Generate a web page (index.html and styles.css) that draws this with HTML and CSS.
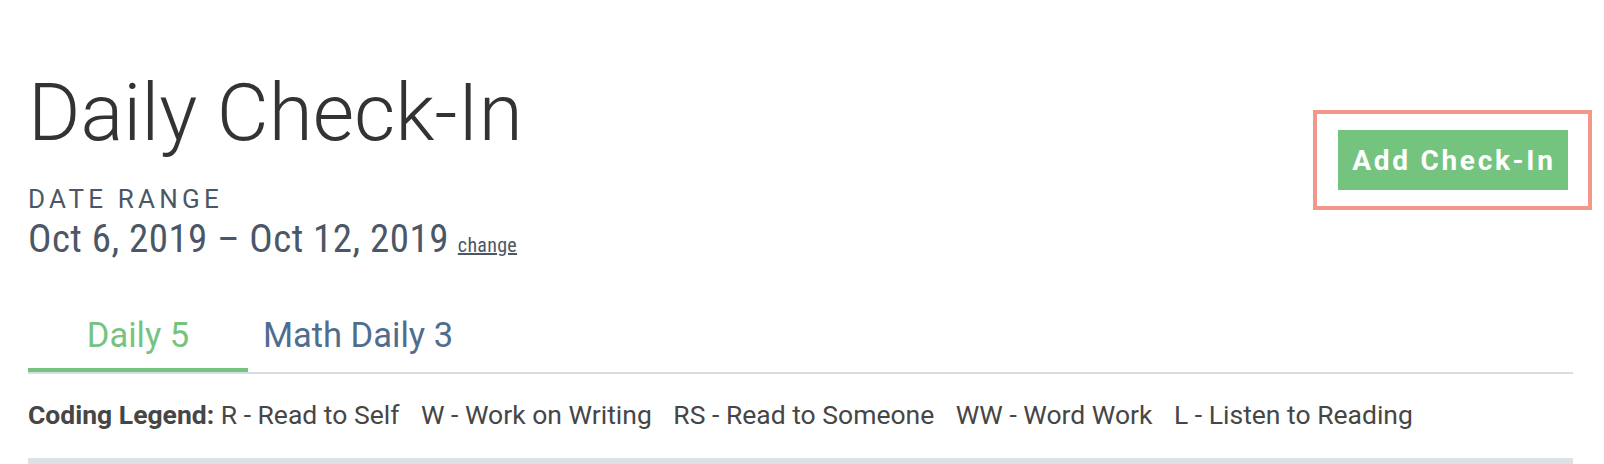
FILE: index.html
```html
<!DOCTYPE html>
<html lang="en">
<head>
<meta charset="utf-8">
<title>Daily Check-In</title>
<link rel="stylesheet" href="styles.css">
</head>
<body>
<main class="page">
  <header class="header">
    <div class="heading">
      <h1 class="title">Daily Check-In</h1>
      <div class="range-label">DATE RANGE</div>
      <div class="range"><span class="range-value">Oct 6, 2019 – Oct 12, 2019</span><a class="change" href="#">change</a></div>
    </div>
    <div class="action">
      <button class="add-btn" type="button">Add Check-In</button>
    </div>
  </header>

  <nav class="tabs">
    <a class="tab tab-active" href="#">Daily 5</a>
    <a class="tab" href="#">Math Daily 3</a>
  </nav>

  <p class="legend">
    <b class="legend-title">Coding Legend:</b>
    <span class="legend-item">R - Read to Self</span>
    <span class="legend-item">W - Work on Writing</span>
    <span class="legend-item">RS - Read to Someone</span>
    <span class="legend-item">WW - Word Work</span>
    <span class="legend-item">L - Listen to Reading</span>
  </p>

  <div class="table-head"></div>
</main>
</body>
</html>
```

FILE: styles.css
```css
* { box-sizing: border-box; }

html, body {
  margin: 0;
  padding: 0;
  background: #ffffff;
}

body {
  font-family: Roboto, "Liberation Sans", sans-serif;
  overflow: hidden;
}

.page {
  padding: 65px 31px 0 28px;
}

.header {
  display: flex;
  justify-content: space-between;
  align-items: flex-start;
}

.title {
  margin: 0;
  font-size: 80px;
  line-height: 96px;
  font-weight: 300;
  color: #333333;
}

.range-label {
  margin-top: 23px;
  font-size: 26px;
  line-height: 30px;
  letter-spacing: 4.2px;
  color: #4b5767;
}

.range {
  margin-top: 3px;
  height: 44px;
  font-family: "Roboto Condensed", Roboto, sans-serif;
  font-stretch: condensed;
  font-size: 39px;
  line-height: 44px;
  color: #4b5767;
  white-space: nowrap;
}

.range-value {
  letter-spacing: 0.45px;
}

.change {
  margin-left: 9px;
  font-size: 20px;
  line-height: 1;
  letter-spacing: 0.3px;
  color: #4b5767;
}

.action {
  position: relative;
  margin-top: 65px;
  margin-right: 5px;
}

.action::after {
  content: "";
  position: absolute;
  left: -25px;
  right: -24px;
  top: -20px;
  bottom: -20px;
  border: 4px solid #f3978a;
  pointer-events: none;
}

.add-btn {
  display: block;
  width: 230px;
  height: 60px;
  border: 0;
  background: #74c47f;
  color: #ffffff;
  font-family: Roboto, "Liberation Sans", sans-serif;
  font-weight: 700;
  font-size: 28px;
  letter-spacing: 2.7px;
  padding: 0 0 0 2px;
}

.tabs {
  display: flex;
  margin-top: 54px;
  border-bottom: 2px solid #d9dde1;
}

.tab {
  width: 220px;
  text-align: center;
  font-size: 34.5px;
  line-height: 40px;
  padding-bottom: 13px;
  border-bottom: 4px solid transparent;
  color: #506d8e;
  text-decoration: none;
}

.tab-active {
  color: #74c47f;
  border-bottom-color: #74c47f;
}

.legend {
  margin: 26px 0 0 0;
  font-size: 26.5px;
  line-height: 30px;
  color: #464646;
  white-space: nowrap;
}

.legend-title {
  font-weight: 700;
}

.legend-item {
  margin-right: 15px;
}

.table-head {
  margin-top: 28px;
  height: 12px;
  background: #dde1e5;
}
```
